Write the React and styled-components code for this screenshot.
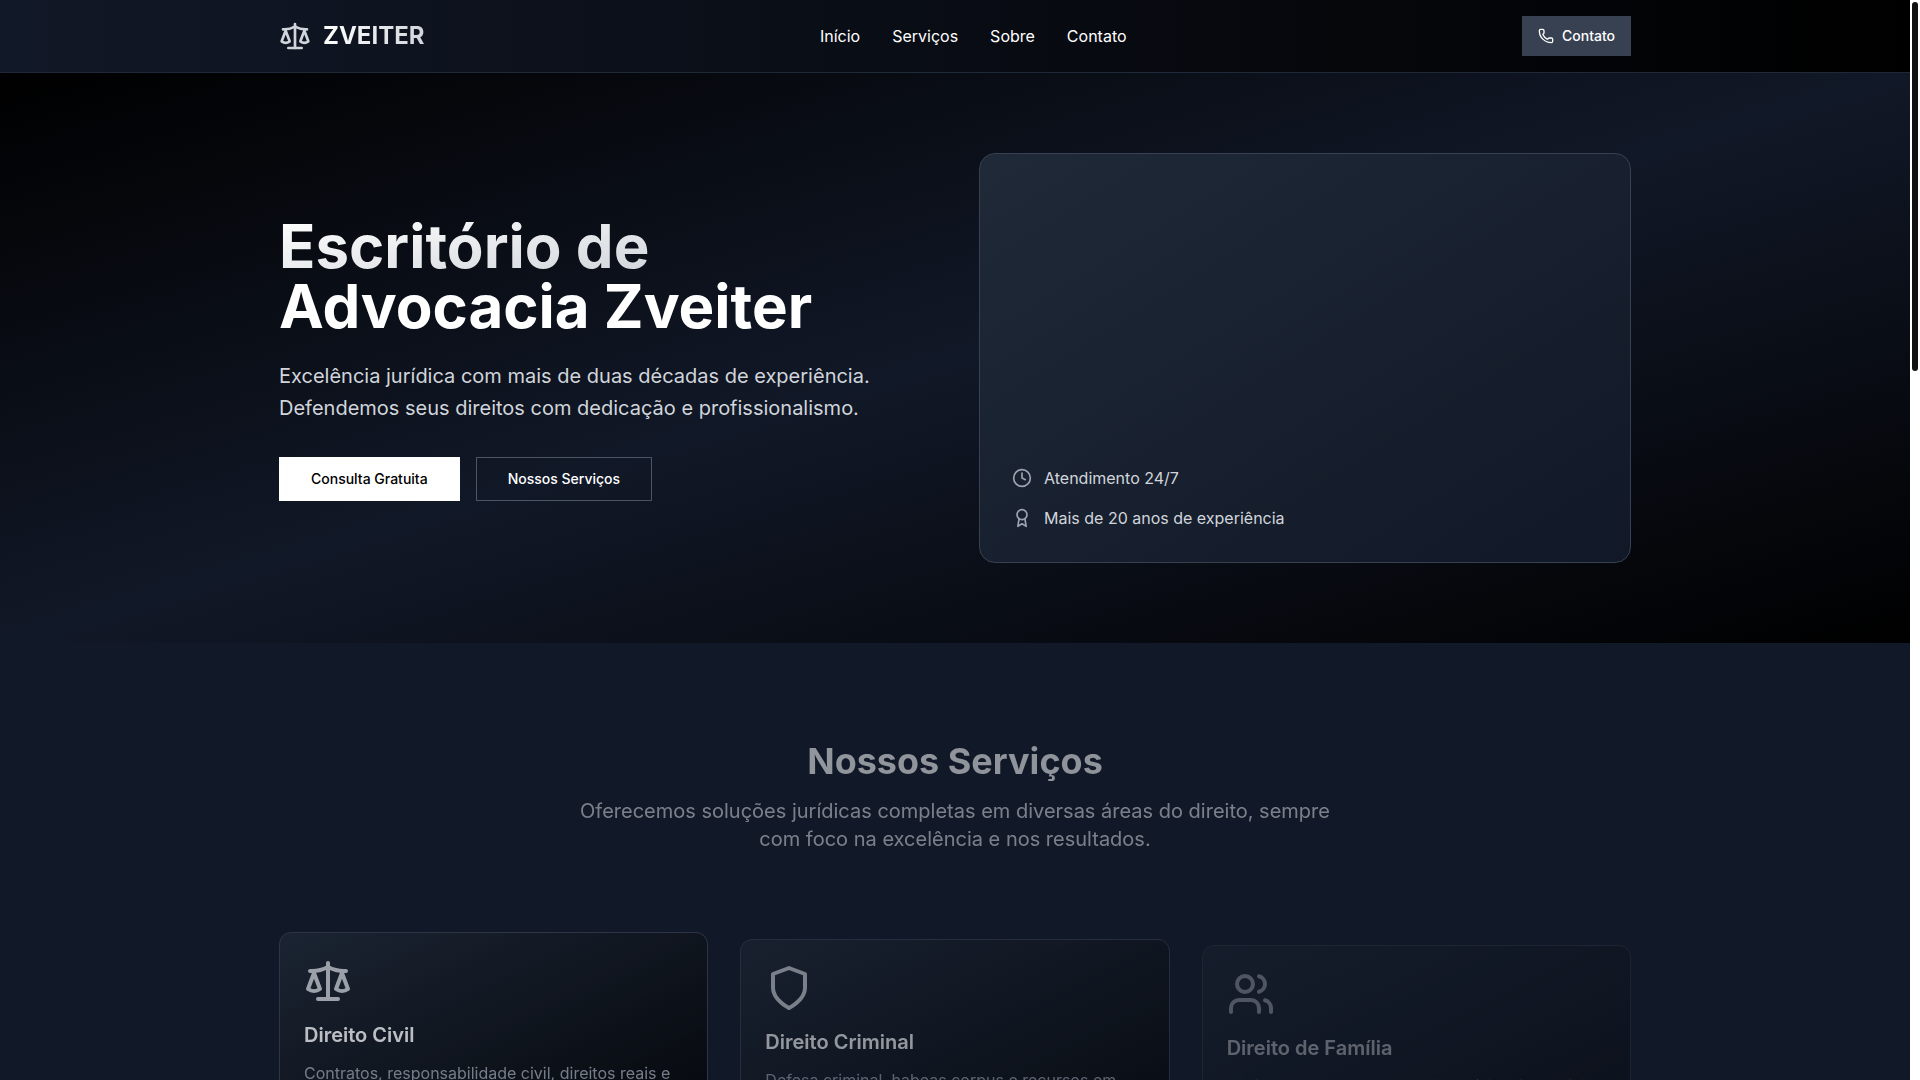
import React from "react"
import styled, { createGlobalStyle } from "styled-components"
import { Clock, Phone, Scale, Users } from "lucide-react"

const Outline = ({ size, color = "currentColor", children }) => (
  <svg
    width={size}
    height={size}
    viewBox="0 0 24 24"
    fill="none"
    stroke={color}
    strokeWidth="2"
    strokeLinecap="round"
    strokeLinejoin="round"
  >
    {children}
  </svg>
)

const ShieldIcon = (props) => (
  <Outline {...props}>
    <path d="M12 22s8-4 8-10V5l-8-3-8 3v7c0 6 8 10 8 10" />
  </Outline>
)

const AwardIcon = (props) => (
  <Outline {...props}>
    <circle cx="12" cy="8" r="6" />
    <path d="M15.477 12.89 17 22l-5-3-5 3 1.523-9.11" />
  </Outline>
)

const navData = [
  { title: "Início", link: "#inicio" },
  { title: "Serviços", link: "#servicos" },
  { title: "Sobre", link: "#sobre" },
  { title: "Contato", link: "#contato" },
]

const servicesData = [
  {
    icon: Scale,
    title: "Direito Civil",
    text: "Contratos, responsabilidade civil, direitos reais e obrigações.",
    opacity: 0.72,
    shift: 0,
  },
  {
    icon: ShieldIcon,
    title: "Direito Criminal",
    text: "Defesa criminal, habeas corpus e recursos em todas as instâncias.",
    opacity: 0.55,
    shift: 7,
  },
  {
    icon: Users,
    title: "Direito de Família",
    text: "Divórcio, guarda, pensão alimentícia e inventário.",
    opacity: 0.32,
    shift: 13,
  },
]

const Header = () => (
  <Bar>
    <BarInner>
      <Logo href="#inicio">
        <Scale size={32} color="#d1d5db" />
        <LogoText>ZVEITER</LogoText>
      </Logo>
      <NavMenu>
        {navData.map((item) => (
          <NavLink href={item.link} key={item.title}>
            {item.title}
          </NavLink>
        ))}
      </NavMenu>
      <ContactBtn type="button">
        <Phone size={16} />
        Contato
      </ContactBtn>
    </BarInner>
  </Bar>
)

const Hero = () => (
  <HeroSection id="inicio">
    <HeroGrid>
      <div>
        <HeroTitle>
          <Fade>Escritório de</Fade>
          <br />
          Advocacia Zveiter
        </HeroTitle>
        <HeroText>
          Excelência jurídica com mais de duas décadas de experiência.
          Defendemos seus direitos com dedicação e profissionalismo.
        </HeroText>
        <HeroButtons>
          <Button $primary type="button">
            Consulta Gratuita
          </Button>
          <Button type="button">Nossos Serviços</Button>
        </HeroButtons>
      </div>
      <HeroCard>
        <Perk>
          <Clock size={20} />
          <span>Atendimento 24/7</span>
        </Perk>
        <Perk>
          <AwardIcon size={20} />
          <span>Mais de 20 anos de experiência</span>
        </Perk>
      </HeroCard>
    </HeroGrid>
  </HeroSection>
)

const Services = () => (
  <ServicesSection id="servicos">
    <Intro>
      <SectionTitle>Nossos Serviços</SectionTitle>
      <SectionText>
        Oferecemos soluções jurídicas completas em diversas áreas do direito,
        sempre com foco na excelência e nos resultados.
      </SectionText>
    </Intro>
    <ServiceGrid>
      {servicesData.map(({ icon: Icon, title, text, opacity, shift }) => (
        <ServiceCard key={title} $opacity={opacity} $shift={shift}>
          <Icon size={48} color="#d1d5db" />
          <ServiceTitle>{title}</ServiceTitle>
          <ServiceText>{text}</ServiceText>
        </ServiceCard>
      ))}
    </ServiceGrid>
  </ServicesSection>
)

const App = () => {
  return (
    <Shell>
      <GlobalStyle />
      <Scroller>
        <Header />
        <main>
          <Hero />
          <Services />
        </main>
      </Scroller>
      <Rail aria-hidden="true">
        <Thumb />
      </Rail>
    </Shell>
  )
}

export default App

const GlobalStyle = createGlobalStyle`
  * {
    box-sizing: border-box;
    margin: 0;
  }

  body {
    background: #111827;
    color: #fff;
    font-family: Inter, "Liberation Sans", sans-serif;
    font-size: 16px;
    line-height: 24px;
    -webkit-font-smoothing: antialiased;
  }
`

const Shell = styled.div`
  display: flex;
  height: 100vh;
`

const Scroller = styled.div`
  flex: 1;
  min-width: 0;
  overflow-y: auto;
  scrollbar-width: none;
`

const Rail = styled.div`
  width: 10px;
  padding: 2px;
  background: #fff;
`

const Thumb = styled.div`
  height: 34.3%;
  border-radius: 4px;
  background: #111;
`

const Container = styled.div`
  max-width: 1400px;
  margin: 0 auto;
  padding: 0 24px;
`

const Bar = styled.header`
  position: sticky;
  top: 0;
  z-index: 50;
  padding: 16px 0;
  border-bottom: 1px solid #1f2937;
  background: linear-gradient(to right, #111827, #000);
`

const BarInner = styled(Container)`
  display: flex;
  align-items: center;
  justify-content: space-between;
`

const Logo = styled.a`
  display: flex;
  align-items: center;
  gap: 12px;
  text-decoration: none;
`

const LogoText = styled.span`
  font-size: 24px;
  line-height: 32px;
  font-weight: 700;
  color: transparent;
  background: linear-gradient(to right, #fff, #d1d5db);
  background-clip: text;
`

const NavMenu = styled.nav`
  display: flex;
  gap: 32px;
`

const NavLink = styled.a`
  color: #fff;
  text-decoration: none;
`

const ContactBtn = styled.button`
  display: flex;
  align-items: center;
  gap: 8px;
  height: 40px;
  padding: 0 16px;
  border: 0;
  background: #374151;
  color: #fff;
  font: inherit;
  font-size: 14px;
  font-weight: 500;
  cursor: pointer;
`

const HeroSection = styled.section`
  padding: 80px 0;
  background: linear-gradient(to bottom right, #000, #111827, #000);
`

const HeroGrid = styled(Container)`
  display: grid;
  grid-template-columns: 1fr 1fr;
  align-items: center;
  gap: 48px;

  @media screen and (max-width: 1024px) {
    grid-template-columns: 1fr;
  }
`

const HeroTitle = styled.h1`
  margin-bottom: 24px;
  font-size: 60px;
  line-height: 60px;
  font-weight: 700;
`

const Fade = styled.span`
  display: inline-block;
  vertical-align: top;
  color: transparent;
  background: linear-gradient(to bottom right, #fff, #d1d5db);
  background-clip: text;
`

const HeroText = styled.p`
  margin-bottom: 33px;
  color: #d1d5db;
  font-size: 20px;
  line-height: 32px;
`

const HeroButtons = styled.div`
  display: flex;
  gap: 16px;
`

const Button = styled.button`
  height: 44px;
  padding: 0 ${({ $primary }) => ($primary ? "32px" : "31px")};
  border: ${({ $primary }) => ($primary ? "0" : "1px solid #4b5563")};
  background: ${({ $primary }) => ($primary ? "#fff" : "transparent")};
  color: ${({ $primary }) => ($primary ? "#000" : "#fff")};
  font: inherit;
  font-size: 14px;
  font-weight: 500;
  cursor: pointer;
`

const HeroCard = styled.div`
  display: flex;
  flex-direction: column;
  justify-content: flex-end;
  gap: 16px;
  min-height: 410px;
  padding: 32px;
  border: 1px solid #374151;
  border-radius: 16px;
  background: linear-gradient(to bottom right, #1f2937, #111827);
`

const Perk = styled.div`
  display: flex;
  align-items: center;
  gap: 12px;
  color: #d1d5db;

  svg {
    color: #9ca3af;
  }
`

const ServicesSection = styled.section`
  padding: 98px 0;
  background: #111827;
`

const Intro = styled(Container)`
  max-width: 816px;
  margin-bottom: 79px;
  text-align: center;
  opacity: 0.55;
`

const SectionTitle = styled.h2`
  margin-bottom: 16px;
  font-size: 36px;
  line-height: 40px;
  font-weight: 700;
  color: transparent;
  background: linear-gradient(to right, #fff, #f3f4f6);
  background-clip: text;
`

const SectionText = styled.p`
  color: #d1d5db;
  font-size: 20px;
  line-height: 28px;
`

const ServiceGrid = styled(Container)`
  display: grid;
  grid-template-columns: repeat(3, 1fr);
  align-items: start;
  gap: 32px;

  @media screen and (max-width: 1024px) {
    grid-template-columns: 1fr;
  }
`

const ServiceCard = styled.article`
  min-height: 210px;
  margin-top: ${({ $shift }) => $shift}px;
  padding: 24px;
  border: 1px solid #374151;
  border-radius: 12px;
  background: linear-gradient(to bottom right, #1f2937, #000);
  opacity: ${({ $opacity }) => $opacity};

  svg {
    display: block;
  }
`

const ServiceTitle = styled.h3`
  margin: 16px 0 12px;
  font-size: 20px;
  line-height: 28px;
  font-weight: 600;
`

const ServiceText = styled.p`
  color: #9ca3af;
`
